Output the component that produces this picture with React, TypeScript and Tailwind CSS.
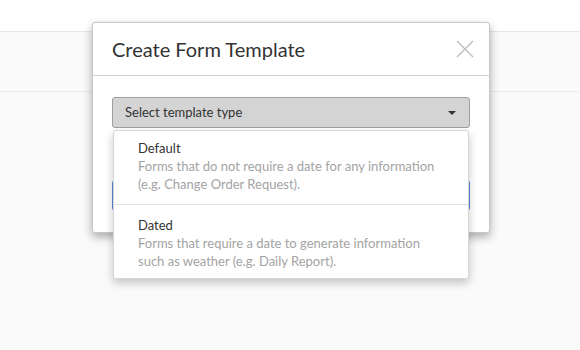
import React from 'react';

const CloseIcon: React.FC = () => (
  <svg width="18" height="18" viewBox="0 0 18 18" fill="none" stroke="#bdbdbd" strokeWidth="1.4">
    <path d="M1 1L17 17M17 1L1 17" />
  </svg>
);

const options = [
  {
    title: 'Default',
    lines: ['Forms that do not require a date for any information', '(e.g. Change Order Request).'],
  },
  {
    title: 'Dated',
    lines: ['Forms that require a date to generate information', 'such as weather (e.g. Daily Report).'],
  },
];

export default function App() {
  return (
    <div className="relative w-[580px] h-[350px] overflow-hidden bg-[#fafafa]" style={{ fontFamily: 'Lato, "Noto Sans", sans-serif' }}>
      {/* page behind the modal */}
      <div className="h-[32px] bg-white border-b border-[#e6e6e6]" />
      <div className="h-[60px] bg-[#fafafa] border-b border-[#ececec]" />

      {/* modal */}
      <div className="absolute left-[92px] top-[22px] w-[398px] bg-white rounded-[3px] border border-[#c8c8c8] shadow-[0_4px_10px_rgba(0,0,0,0.32)]">
        <div className="flex items-center justify-between h-[53px] pl-[19px] pr-[15px] border-b border-[#cfcfcf]">
          <h1 className="text-[20px] text-[#333] leading-none">Create Form Template</h1>
          <CloseIcon />
        </div>
        <div className="px-[19px] pt-[21px] pb-[21px]">
          <div className="relative">
            <div className="flex items-center justify-between h-[31px] pl-[12px] pr-[13px] bg-[#d4d4d4] border border-[#9e9e9e] rounded-[3px]">
              <span className="text-[13px] text-[#333]">Select template type</span>
              <span className="w-0 h-0 border-l-[4px] border-r-[4px] border-t-[4px] border-l-transparent border-r-transparent border-t-[#333]" />
            </div>

            {/* dropdown menu */}
            <div className="absolute z-10 left-[1px] right-[1px] top-[33px] bg-white rounded-[3px] border border-[#d6d6d6] shadow-[0_4px_10px_rgba(0,0,0,0.22)]">
              {options.map((o, i) => (
                <div
                  key={o.title}
                  className={
                    'pl-[24px] pr-4 text-[13px] leading-[18px] ' +
                    (i > 0 ? 'border-t border-[#e2e2e2] pt-[11px] pb-[8px]' : 'pt-[8px] pb-[11px]')
                  }
                >
                  <div className="text-[#333]">{o.title}</div>
                  {o.lines.map((l) => (
                    <div key={l} className="text-[#a3a3a3]">{l}</div>
                  ))}
                </div>
              ))}
            </div>
          </div>
          <div className="mt-[52px] h-[31px] border border-[#5b87d8] rounded-[3px]" />
        </div>
      </div>
    </div>
  );
}
